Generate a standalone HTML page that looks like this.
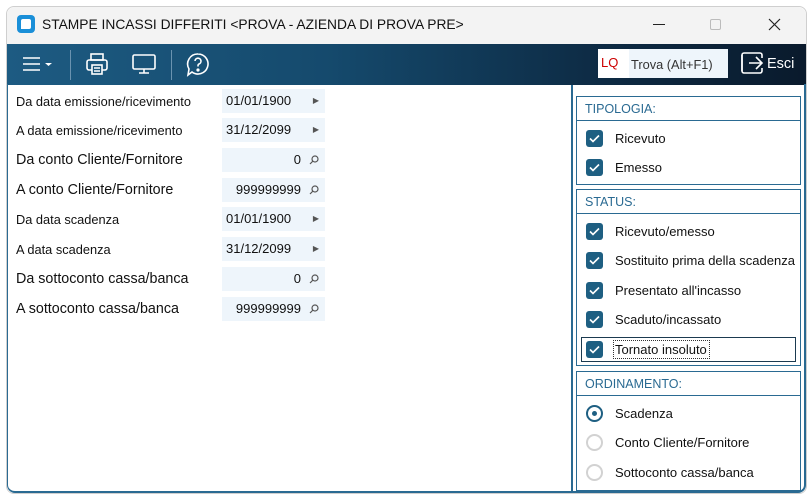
<!DOCTYPE html>
<html><head><meta charset="utf-8"><style>
*{margin:0;padding:0;box-sizing:border-box}
body{width:812px;height:497px;background:#fff;font-family:"Liberation Sans","DejaVu Sans",sans-serif;position:relative;overflow:hidden;color:#111}
.a{position:absolute}
.win{left:6px;top:6px;width:801px;height:488px;border:1px solid #cfcfcf;border-radius:8px;background:#fff}
.title{left:7px;top:7px;width:799px;height:37px;background:#f3f3f3;border-radius:8px 8px 0 0}
.tb{left:7px;top:44px;width:799px;height:41px;background:linear-gradient(90deg,#1d5b82 0%,#154a6d 40%,#0d2a43 75%,#0a1a2c 100%)}
.content{left:7px;top:84px;width:799px;height:409px;border:2px solid #2a6a92;border-left-width:1.5px;border-top:none;border-radius:0 0 8px 8px}
.lbl{left:16px;font-size:12.8px;color:#111}
.big{font-size:14.3px}
.inp{left:222px;width:103px;height:24px;background:#eef5fb;font-size:13px;line-height:24px}
.grp{left:576px;width:225px;border:1.5px solid #2a6a92}
.gh{height:24px;border-bottom:1.5px solid #2a6a92;font-size:12.5px;color:#2a6a92;padding:5px 0 0 8px}
.cb{left:586px;width:17px;height:17px;background:#1e5f82;border-radius:3px}
.cb svg{position:absolute;left:3px;top:4px}
.cl{left:615px;font-size:13px}
.rd{left:586px;width:17px;height:17px;border-radius:50%;border:2px solid #d2d2d2}
.mg{position:absolute;right:6px;top:7px}
</style></head><body>
<div class="a win"></div>
<div class="a title"></div>
<div class="a" style="left:17px;top:15px;width:18px;height:18px;background:#1a8fd8;border-radius:4px"><div style="position:absolute;left:4px;top:4px;width:10px;height:10px;background:#fff;border-radius:2px 2px 2px 0"></div></div>
<div class="a" style="left:42px;top:17px;font-size:13.8px;color:#111">STAMPE INCASSI DIFFERITI &lt;PROVA - AZIENDA DI PROVA PRE&gt;</div>
<div class="a" style="left:653px;top:24px;width:12px;height:1px;background:#222"></div>
<div class="a" style="left:710px;top:19px;width:11px;height:11px;border:1px solid #bbb;border-radius:2px"></div>
<svg class="a" style="left:768px;top:18px" width="13" height="13"><path d="M1 1L12 12M12 1L1 12" stroke="#222" stroke-width="1.2"/></svg>
<div class="a tb"></div>
<svg class="a" style="left:20px;top:52px" width="40" height="24" fill="none" stroke="#fff" stroke-width="1.6"><path d="M3 6H20M3 12H20M3 18H20"/><path d="M25 11h7l-3.5 3z" fill="#fff" stroke="none"/></svg>
<div class="a" style="left:70px;top:50px;width:1px;height:30px;background:#6a93b0"></div>
<svg class="a" style="left:85px;top:52px" width="24" height="24" fill="none" stroke="#fff" stroke-width="1.6"><rect x="6" y="2" width="12" height="6"/><rect x="2" y="8" width="20" height="10" rx="2"/><rect x="7" y="13" width="10" height="9" fill="#1a5478"/><path d="M9 16h6M9 19h6"/></svg>
<svg class="a" style="left:131px;top:52px" width="26" height="24" fill="none" stroke="#fff" stroke-width="1.6"><rect x="2" y="3" width="22" height="14" rx="1.5"/><path d="M13 17v4M8 21h10"/></svg>
<div class="a" style="left:171px;top:50px;width:1px;height:30px;background:#6a93b0"></div>
<svg class="a" style="left:186px;top:52px" width="24" height="26" fill="none" stroke="#fff" stroke-width="1.6"><path d="M12 2a10 10 0 1 1-6 18l-4 3 1-6A10 10 0 0 1 12 2z"/><path d="M9 9a3 3 0 1 1 4 3c-1 .5-1 1-1 2.5"/><circle cx="12" cy="18" r=".8" fill="#fff"/></svg>
<div class="a" style="left:598px;top:49px;width:31px;height:29px;background:#fff;color:#c00;font-size:13px;padding:6px 0 0 3px">LQ</div>
<div class="a" style="left:629px;top:49px;width:99px;height:29px;background:#eef5fb;color:#333;font-size:12.8px;padding:8px 0 0 2px">Trova (Alt+F1)</div>
<svg class="a" style="left:740px;top:51px" width="24" height="24" fill="none" stroke="#fff" stroke-width="1.6"><path d="M9 2H4a2 2 0 0 0-2 2v16a2 2 0 0 0 2 2h5"/><path d="M2 4v16"/><path d="M9 12h12M16 6l6 6-6 6"/><path d="M9 2h11a2 2 0 0 1 2 2v3M22 17v3a2 2 0 0 1-2 2H9"/></svg>
<div class="a" style="left:767px;top:56px;color:#fff;font-size:14.5px">Esci</div>
<div class="a content"></div>
<div class="a" style="left:571px;top:85px;width:2px;height:407px;background:#2a6a92"></div>

<div class="a lbl" style="top:94px">Da data emissione/ricevimento</div>
<div class="a inp" style="top:89px;padding-left:4px">01/01/1900<span style="position:absolute;right:6px;font-size:8px;color:#555">▶</span></div>
<div class="a lbl" style="top:123px">A data emissione/ricevimento</div>
<div class="a inp" style="top:118px;padding-left:4px">31/12/2099<span style="position:absolute;right:6px;font-size:8px;color:#555">▶</span></div>
<div class="a lbl big" style="top:152px">Da conto Cliente/Fornitore</div>
<div class="a inp" style="top:148px;text-align:right;padding-right:24px">0<svg class="mg" width="10" height="10" fill="none" stroke="#555" stroke-width="1.2"><circle cx="6" cy="4" r="3"/><path d="M4 6L1 9"/></svg></div>
<div class="a lbl big" style="top:182px">A conto Cliente/Fornitore</div>
<div class="a inp" style="top:178px;text-align:right;padding-right:24px">999999999<svg class="mg" width="10" height="10" fill="none" stroke="#555" stroke-width="1.2"><circle cx="6" cy="4" r="3"/><path d="M4 6L1 9"/></svg></div>
<div class="a lbl" style="top:212px">Da data scadenza</div>
<div class="a inp" style="top:207px;padding-left:4px">01/01/1900<span style="position:absolute;right:6px;font-size:8px;color:#555">▶</span></div>
<div class="a lbl" style="top:242px">A data scadenza</div>
<div class="a inp" style="top:237px;padding-left:4px">31/12/2099<span style="position:absolute;right:6px;font-size:8px;color:#555">▶</span></div>
<div class="a lbl big" style="top:271px">Da sottoconto cassa/banca</div>
<div class="a inp" style="top:267px;text-align:right;padding-right:24px">0<svg class="mg" width="10" height="10" fill="none" stroke="#555" stroke-width="1.2"><circle cx="6" cy="4" r="3"/><path d="M4 6L1 9"/></svg></div>
<div class="a lbl big" style="top:301px">A sottoconto cassa/banca</div>
<div class="a inp" style="top:297px;text-align:right;padding-right:24px">999999999<svg class="mg" width="10" height="10" fill="none" stroke="#555" stroke-width="1.2"><circle cx="6" cy="4" r="3"/><path d="M4 6L1 9"/></svg></div>

<div class="a grp" style="top:96px;height:89px"><div class="gh">TIPOLOGIA:</div></div>
<div class="a grp" style="top:189px;height:177px"><div class="gh">STATUS:</div></div>
<div class="a grp" style="top:371px;height:120px"><div class="gh">ORDINAMENTO:</div></div>
<div class="a" style="left:581px;top:337px;width:215px;height:25px;border:1.5px solid #1b3a50"></div>
<div class="a" style="left:613px;top:340px;width:97px;height:19px;border:1px dotted #333"></div>

<div class="a cb" style="top:130px"><svg width="11" height="9"><path d="M1 4.5l3 3 6-6" stroke="#fff" stroke-width="1.6" fill="none"/></svg></div><div class="a cl" style="top:131px">Ricevuto</div>
<div class="a cb" style="top:159px"><svg width="11" height="9"><path d="M1 4.5l3 3 6-6" stroke="#fff" stroke-width="1.6" fill="none"/></svg></div><div class="a cl" style="top:160px">Emesso</div>
<div class="a cb" style="top:223px"><svg width="11" height="9"><path d="M1 4.5l3 3 6-6" stroke="#fff" stroke-width="1.6" fill="none"/></svg></div><div class="a cl" style="top:224px">Ricevuto/emesso</div>
<div class="a cb" style="top:252px"><svg width="11" height="9"><path d="M1 4.5l3 3 6-6" stroke="#fff" stroke-width="1.6" fill="none"/></svg></div><div class="a cl" style="top:253px">Sostituito prima della scadenza</div>
<div class="a cb" style="top:282px"><svg width="11" height="9"><path d="M1 4.5l3 3 6-6" stroke="#fff" stroke-width="1.6" fill="none"/></svg></div><div class="a cl" style="top:283px">Presentato all'incasso</div>
<div class="a cb" style="top:311px"><svg width="11" height="9"><path d="M1 4.5l3 3 6-6" stroke="#fff" stroke-width="1.6" fill="none"/></svg></div><div class="a cl" style="top:312px">Scaduto/incassato</div>
<div class="a cb" style="top:341px"><svg width="11" height="9"><path d="M1 4.5l3 3 6-6" stroke="#fff" stroke-width="1.6" fill="none"/></svg></div><div class="a cl" style="top:342px">Tornato insoluto</div>

<div class="a rd" style="top:405px;border-color:#1e5f82"><div style="position:absolute;left:4px;top:4px;width:5px;height:5px;border-radius:50%;background:#1e5f82"></div></div><div class="a cl" style="top:406px">Scadenza</div>
<div class="a rd" style="top:434px"></div><div class="a cl" style="top:435px">Conto Cliente/Fornitore</div>
<div class="a rd" style="top:464px"></div><div class="a cl" style="top:465px">Sottoconto cassa/banca</div>
</body></html>
